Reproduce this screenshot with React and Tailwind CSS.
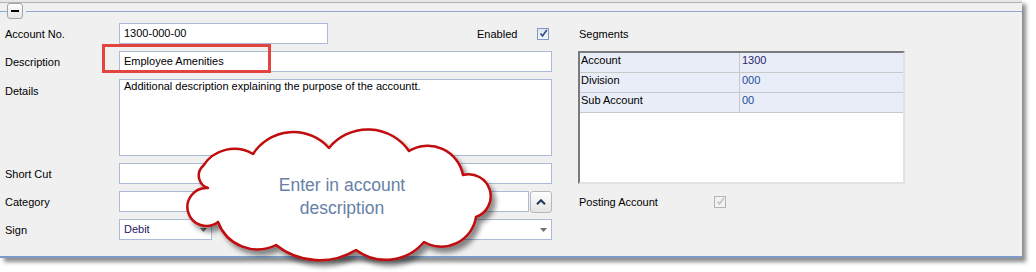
import React from "react";

const font = { fontFamily: '"Liberation Sans", Arial, sans-serif' };

const Check = ({ disabled }) => (
  <span
    className={`flex h-[12px] w-[12px] items-center justify-center border ${
      disabled ? "border-[#b4b4b4] bg-[#f3f3f3]" : "border-[#8199c0] bg-gradient-to-b from-[#dfe6f2] to-[#f4f7fb]"
    }`}
  >
    <svg width="9" height="9" viewBox="0 0 9 9">
      <path
        d="M1.5 4.5 L3.5 7 L7.8 1"
        fill="none"
        stroke={disabled ? "#b9c4d6" : "#2a4a8c"}
        strokeWidth="1.6"
      />
    </svg>
  </span>
);

const Field = ({ children, className = "" }) => (
  <div className={`flex h-[21px] items-center border border-[#abbbd6] bg-white px-[4px] ${className}`}>
    {children}
  </div>
);

const Arrow = () => (
  <svg width="7" height="4" viewBox="0 0 7 4" className="ml-auto">
    <path d="M0 0 H7 L3.5 4 Z" fill="#6e6e6e" />
  </svg>
);

const segments = [
  ["Account", "1300", "text-[#2b1f6e]"],
  ["Division", "000", "text-[#1a4c9c]"],
  ["Sub Account", "00", "text-[#1a4c9c]"],
];

export default function App() {
  return (
    <div className="relative h-[272px] w-[1036px] bg-white text-[11px] text-black" style={font}>
      {/* PANEL */}
      <div className="h-[258px] w-[1022px] border-b-2 border-[#7d9bc6] bg-[#f0f0f0] shadow-[4px_4px_4px_rgba(0,0,0,0.45)]">
        <div className="h-[2px] bg-[#e6e6e6]" />
        <div className="h-px bg-[#b2b2b2]" />

        {/* GROUP HEADER */}
        <div className="flex h-[16px] items-center">
          <div className="h-px w-[7px] bg-[#8ea8cf]" />
          <div className="flex h-[16px] w-[16px] items-center justify-center rounded-[3px] border border-[#a3a3a3] bg-gradient-to-b from-white to-[#e6e6e6]">
            <div className="h-[1.5px] w-[8px] bg-black" />
          </div>
          <div className="ml-[3px] h-px flex-1 bg-[#8ea8cf]" />
        </div>

        {/* BODY */}
        <div className="mt-[4px] flex pl-[5px]">
          {/* LEFT */}
          <div className="flex w-[547px] flex-col gap-[7px]">
            <div className="flex h-[21px] items-center">
              <span className="w-[114px] pt-px">Account No.</span>
              <Field className="w-[209px]">1300-000-00</Field>
              <span className="ml-[149px] pt-px">Enabled</span>
              <span className="ml-[20px]">
                <Check />
              </span>
            </div>
            <div className="flex h-[21px] items-center">
              <span className="w-[114px] pt-px">Description</span>
              <Field className="flex-1">Employee Amenities</Field>
            </div>
            <div className="flex h-[77px] items-start">
              <span className="w-[114px] pt-[4px]">Details</span>
              <div className="h-[77px] flex-1 border border-[#abbbd6] bg-white px-[4px] leading-[13px]">
                Additional description explaining the purpose of the accountt.
              </div>
            </div>
            <div className="flex h-[21px] items-center">
              <span className="w-[114px] pt-px">Short Cut</span>
              <Field className="flex-1" />
            </div>
            <div className="flex h-[21px] items-center">
              <span className="w-[114px] pt-px">Category</span>
              <Field className="w-[410px]" />
              <button className="ml-px flex h-[22px] w-[22px] items-center justify-center rounded-[3px] border border-[#b8b8b8] bg-gradient-to-b from-white to-[#e4e4e4]">
                <svg width="10" height="6" viewBox="0 0 10 6">
                  <path d="M1 5.2 L5 1.2 L9 5.2" fill="none" stroke="#22365c" strokeWidth="2" />
                </svg>
              </button>
            </div>
            <div className="flex h-[21px] items-center">
              <span className="w-[114px] pt-px">Sign</span>
              <Field className="w-[93px] text-[#25175f]">
                Debit
                <Arrow />
              </Field>
              <Field className="ml-[150px] flex-1">
                <Arrow />
              </Field>
            </div>
          </div>

          {/* RIGHT */}
          <div className="ml-[26px] flex w-[327px] flex-col gap-[7px]">
            <div className="flex h-[21px] items-center pl-px pt-px">Segments</div>
            <div className="h-[133px] border-2 border-t-[#7a7a7a] border-l-[#7a7a7a] border-r-[#e2e2e2] border-b-[#e2e2e2] bg-white">
              {segments.map(([name, value, color]) => (
                <div key={name} className="flex h-[20px] border-b border-[#c9c9c9] bg-[#e9edf7] leading-[14px]">
                  <div className="w-[160px] border-r border-[#c9c9c9] pl-[1px]">{name}</div>
                  <div className={`pl-[2px] ${color}`}>{value}</div>
                </div>
              ))}
            </div>
            <div className="flex h-[21px] items-center pl-px">
              <span className="w-[135px] pt-px">Posting Account</span>
              <Check disabled />
            </div>
          </div>
        </div>
      </div>

      {/* HIGHLIGHT */}
      <div className="pointer-events-none absolute left-[102px] top-[44px] h-[29px] w-[169px] border-[3px] border-[#e2443f]" />

      {/* CALLOUT */}
      <svg className="pointer-events-none absolute left-0 top-0" width="1036" height="272">
        <defs>
          <filter id="cloudShadow" x="-10%" y="-10%" width="130%" height="140%">
            <feDropShadow dx="4" dy="5" stdDeviation="2.5" floodColor="#000" floodOpacity="0.45" />
          </filter>
        </defs>
        <path
          d="M218 222 A19 19 0 1 1 208 188 A13 13 0 0 1 203 166 A37 37 0 0 1 253 154 A48 48 0 0 1 329 148 A50 50 0 0 1 409 151 A36 36 0 0 1 463 175 A22 22 0 0 1 476 217 A35 35 0 0 1 424 242 A50 50 0 0 1 356 250 A70 70 0 0 1 276 245 A42 42 0 0 1 218 222 Z"
          fill="#ffffff"
          stroke="#c0080c"
          strokeWidth="2.5"
          strokeLinejoin="round"
          filter="url(#cloudShadow)"
        />
      </svg>
      <div className="pointer-events-none absolute left-[250px] top-[174px] w-[184px] text-center text-[17.5px] leading-[23px] text-[#6781a6]">
        Enter in account
        <br />
        description
      </div>
    </div>
  );
}
